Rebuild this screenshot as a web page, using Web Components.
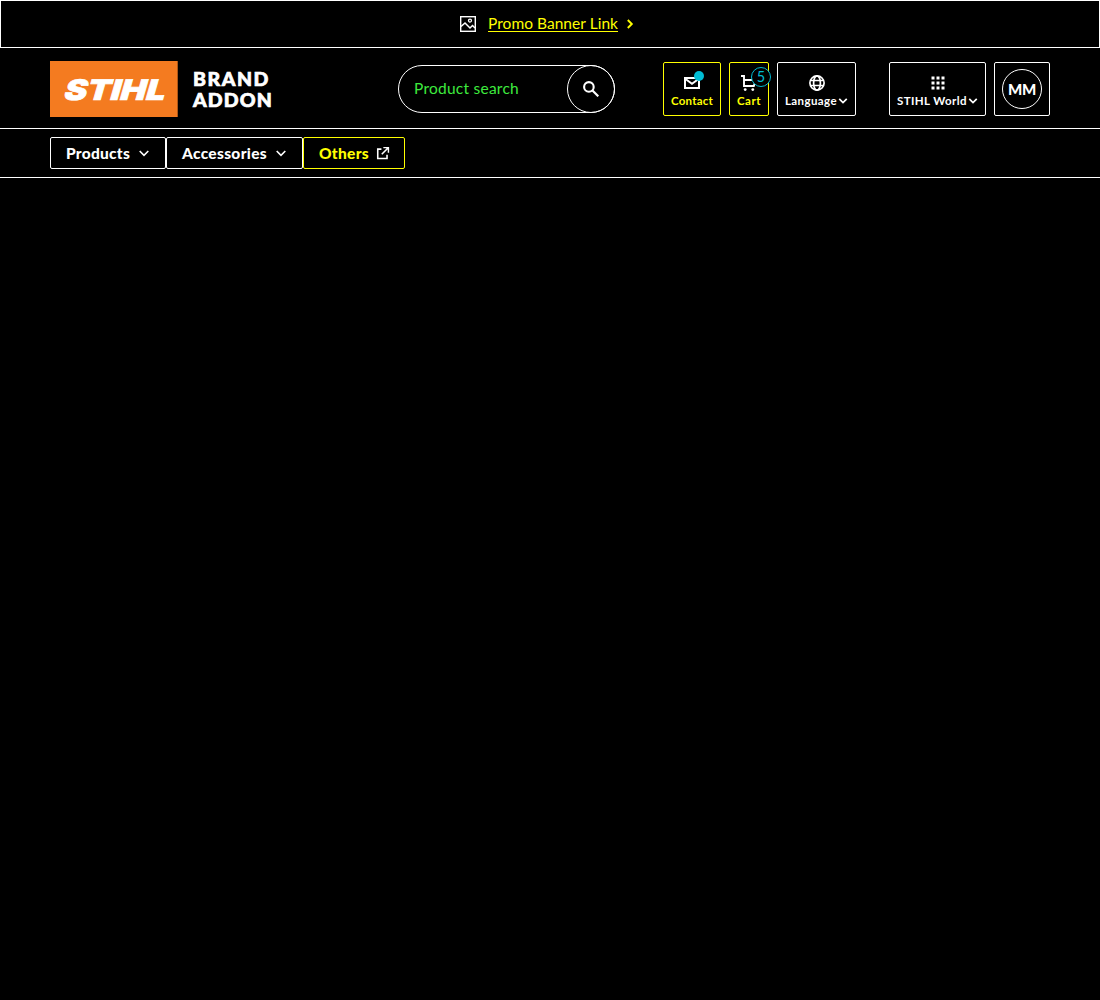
<!DOCTYPE html>
<html lang="en">
<head>
<meta charset="utf-8">
<title>STIHL Header</title>
<style>
  html, body { margin: 0; background: #000; }
  body { font-family: Lato, "Open Sans", sans-serif; color: #fff; min-height: 1000px; }
</style>
</head>
<body>
<page-header></page-header>
<script>
const icons = {
  image: '<rect x=".7" y=".7" width="14.6" height="14.6" fill="none" stroke="currentColor" stroke-width="1.4"/><path d="M1 10.5 5 7l5 5 2.5-2.5L15 12" fill="none" stroke="currentColor" stroke-width="1.5"/><circle cx="10" cy="4.6" r="1.5" fill="none" stroke="currentColor" stroke-width="1.3"/>',
  right: '<path d="m5.8 4 4 4-4 4" fill="none" stroke="currentColor" stroke-width="1.9"/>',
  down: '<path d="m3.7 6 4.3 4.3L12.3 6" fill="none" stroke="currentColor" stroke-width="1.6"/>',
  downSmall: '<path d="m3 5.2 5 5 5-5" fill="none" stroke="currentColor" stroke-width="2.3"/>',
  search: '<circle cx="5.9" cy="5.9" r="4.8" fill="none" stroke="currentColor" stroke-width="2.1"/><path d="m9.2 9.2 6.1 6.1" fill="none" stroke="currentColor" stroke-width="2.2"/>',
  mail: '<path d="M1 3h14v10H1z" fill="none" stroke="currentColor" stroke-width="2"/><path d="m1.5 4 6.5 4.8L14.5 4" fill="none" stroke="currentColor" stroke-width="1.9"/>',
  cart: '<path d="M0 1h3v10h9.8l2-6H3" fill="none" stroke="currentColor" stroke-width="1.9"/><circle cx="4.2" cy="14.6" r="1.4" fill="currentColor"/><circle cx="11.8" cy="14.6" r="1.4" fill="currentColor"/>',
  globe: '<g fill="none" stroke="currentColor" stroke-width="1.7"><circle cx="8" cy="8" r="7.1"/><ellipse cx="8" cy="8" rx="3.4" ry="7.1"/><path d="M1.4 5.5h13.2M1.4 10.5h13.2"/></g>',
  grid: '<path fill="currentColor" d="M1.5 1.5h3v3h-3zM6.5 1.5h3v3h-3zM11.5 1.5h3v3h-3zM1.5 6.5h3v3h-3zM6.5 6.5h3v3h-3zM11.5 6.5h3v3h-3zM1.5 11.5h3v3h-3zM6.5 11.5h3v3h-3zM11.5 11.5h3v3h-3z"/>',
  external: '<path d="M6.2 3.6H2v10.6h10.6V10M12.6 3.4 6.6 9.4" fill="none" stroke="currentColor" stroke-width="1.8"/><path d="M8.4 1H15v6.6h-1.6V4.4L11.6 2.6H8.4z" fill="currentColor"/><path d="m11.6 2.6 1.8 1.8V2.6z" fill="currentColor"/>'
};

function define(name, html, after) {
  const t = document.createElement('template');
  t.innerHTML = html;
  customElements.define(name, class extends HTMLElement {
    constructor() {
      super();
      this.attachShadow({ mode: 'open' }).append(t.content.cloneNode(true));
    }
    connectedCallback() { if (after) after(this, this.shadowRoot); }
  });
}

define('ui-icon', '<style>:host{display:block;flex:none;width:var(--size,16px);height:var(--size,16px)}svg{display:block;width:100%;height:100%}</style><svg viewBox="0 0 16 16"></svg>',
  (el, root) => { root.querySelector('svg').innerHTML = icons[el.getAttribute('name')]; });

// A label that tracks its letters so that the word fills a given width.
define('tracked-label', '<style>:host{display:block;flex:none;white-space:nowrap}span{display:inline-block;white-space:nowrap;text-decoration:inherit}</style><span></span>',
  (el, root) => {
    const s = root.querySelector('span');
    s.textContent = el.getAttribute('text');
    const w = +el.getAttribute('width');
    const n = s.textContent.length;
    s.style.letterSpacing = (w - s.getBoundingClientRect().width) / n + 'px';
    el.style.width = w + 'px';
  });

define('promo-banner', `<style>
  :host{display:flex;box-sizing:border-box;height:48px;border:1px solid #fff;align-items:center;justify-content:center;padding-right:2px}
  a{display:flex;align-items:center;color:#ff0;font-size:15.5px;line-height:24px;text-decoration:none}
  ui-icon[name=image]{color:#fff;margin-right:12px}
  tracked-label{text-decoration:underline;text-underline-offset:2px;text-decoration-thickness:1px;padding-bottom:2px}
  ui-icon[name=right]{margin-left:4px}
</style><a><ui-icon name="image"></ui-icon><tracked-label text="Promo Banner Link" width="130"></tracked-label><ui-icon name="right"></ui-icon></a>`);

define('brand-logo', `<style>
  :host{display:flex;align-items:center;flex:none}
  svg{display:block}
  .name{margin-left:15px;font-weight:900;font-size:19.5px;line-height:21px;-webkit-text-stroke:.7px #fff}
</style><svg width="128" height="56" viewBox="0 0 128 56"><rect width="127.7" height="56" fill="#f47b20"/>
<text transform="translate(12.5 38.6) skewX(-16)" font-family="Inter, sans-serif" font-weight="900" font-size="28.5" fill="#fff" stroke="#fff" stroke-width=".7" textLength="101" lengthAdjust="spacingAndGlyphs">STIHL</text></svg>
<div class="name"><tracked-label text="BRAND" width="77"></tracked-label><tracked-label text="ADDON" width="80"></tracked-label></div>`);

define('search-field', `<style>
  :host{display:flex;box-sizing:border-box;width:217px;height:48px;border:1px solid #fff;border-radius:24px;align-items:center;justify-content:space-between;flex:none;padding-left:15px;color:#3eea3e;font-size:15.5px;line-height:24px}
  tracked-label{padding-bottom:2px}
  button{all:unset;box-sizing:border-box;width:48px;height:48px;margin-right:-1px;border:1px solid #fff;border-radius:50%;display:flex;align-items:center;justify-content:center;color:#fff}
</style><tracked-label text="Product search" width="105"></tracked-label><button aria-label="Search"><ui-icon name="search"></ui-icon></button>`);

define('header-action', `<style>
  :host{display:flex;flex-direction:column;align-items:center;box-sizing:border-box;height:54px;border:1px solid var(--c,#fff);border-radius:2px;padding:12px 7px 0;flex:none}
  .top{position:relative}
  .label{display:flex;align-items:center;color:var(--c,#fff);font-size:11.5px;font-weight:700;line-height:16px;margin-top:2px}
</style><div class="top"><slot name="icon"></slot><slot name="badge"></slot></div><div class="label"><slot></slot></div>`);

define('count-badge', `<style>
  :host{position:absolute;left:10px;top:-8px;box-sizing:border-box;width:20px;height:20px;border:1px solid #00bcd4;border-radius:50%;background:#000;color:#00bcd4;font-size:14.5px;line-height:17px;text-align:center}
</style><slot></slot>`);
define('dot-badge', '<style>:host{display:block;position:absolute;left:10px;top:-4px;width:10px;height:10px;border-radius:50%;background:#00bcd4}</style>');

define('user-avatar', `<style>
  :host{display:flex;box-sizing:border-box;width:56px;height:54px;border:1px solid #fff;border-radius:2px;align-items:center;justify-content:center;flex:none}
  div{box-sizing:border-box;width:40px;height:40px;border:1px solid #fff;border-radius:50%;display:flex;align-items:center;justify-content:center;font-weight:900;font-size:15px}
</style><div><tracked-label text="MM" width="28"></tracked-label></div>`);

define('nav-item', `<style>
  :host{display:flex;box-sizing:border-box;height:32px;border:1px solid var(--c,#fff);border-radius:2px;align-items:center;padding:0 15px;color:var(--c,#fff);font-weight:900;font-size:15.5px;line-height:24px;flex:none}
</style><slot></slot>`);

define('page-header', `<style>
  :host{display:block}
  .main{display:flex;align-items:center;box-sizing:border-box;height:81px;border-bottom:1px solid #fff;padding:1px 50px 0}
  search-field{margin-left:auto;margin-right:48px}
  .actions,.account{display:flex;gap:8px}
  .account{margin-left:33px}
  ui-icon[name=downSmall]{--size:12px;margin-right:-1px}
  .yellow{--c:#ff0}
  nav{display:flex;align-items:center;box-sizing:border-box;height:49px;border-bottom:1px solid #fff;padding:0 50px}
  nav ui-icon{margin-left:6px;--size:16px}
  nav ui-icon[name=external]{--size:14px;margin-left:7px;color:#fff}
</style>
<promo-banner></promo-banner>
<div class="main">
  <brand-logo></brand-logo>
  <search-field></search-field>
  <div class="actions">
    <header-action class="yellow" style="width:58px"><ui-icon slot="icon" name="mail"></ui-icon><dot-badge slot="badge"></dot-badge><tracked-label text="Contact" width="42"></tracked-label></header-action>
    <header-action class="yellow" style="width:40px"><ui-icon slot="icon" name="cart"></ui-icon><count-badge slot="badge">5</count-badge><tracked-label text="Cart" width="24"></tracked-label></header-action>
    <header-action style="width:79px"><ui-icon slot="icon" name="globe"></ui-icon><tracked-label text="Language" width="52"></tracked-label><ui-icon name="downSmall"></ui-icon></header-action>
  </div>
  <div class="account">
    <header-action style="width:97px"><ui-icon slot="icon" name="grid"></ui-icon><tracked-label text="STIHL World" width="70"></tracked-label><ui-icon name="downSmall"></ui-icon></header-action>
    <user-avatar></user-avatar>
  </div>
</div>
<nav>
  <nav-item style="width:116px"><tracked-label text="Products" width="64"></tracked-label><ui-icon name="down"></ui-icon></nav-item>
  <nav-item style="width:137px"><tracked-label text="Accessories" width="85"></tracked-label><ui-icon name="down"></ui-icon></nav-item>
  <nav-item class="yellow" style="width:102px"><tracked-label text="Others" width="50"></tracked-label><ui-icon name="external"></ui-icon></nav-item>
</nav>`);
</script>
</body>
</html>
